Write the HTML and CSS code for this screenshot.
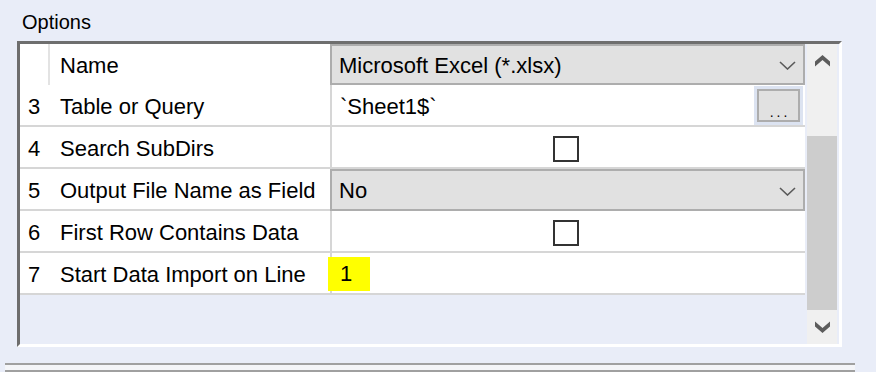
FILE: index.html
```html
<!DOCTYPE html>
<html lang="en">
<head>
  <meta charset="UTF-8" />
  <title>Options</title>
  <link rel="stylesheet" href="styles.css">
</head>
<body>
  <div class="title">Options</div>

  <div class="panel">
    <div class="grid">
      <div class="row first">
        <div class="num"></div>
        <div class="label">Name</div>
        <div class="value dropdown">
          <span>Microsoft Excel (*.xlsx)</span>
          <svg class="chev" width="17" height="9" viewBox="0 0 17 9"><polyline points="1,1 8.5,8 16,1" /></svg>
        </div>
      </div>

      <div class="row">
        <div class="num">3</div>
        <div class="label">Table or Query</div>
        <div class="value">
          <span>`Sheet1$`</span>
          <div class="browse"><span>...</span></div>
        </div>
      </div>

      <div class="row">
        <div class="num">4</div>
        <div class="label">Search SubDirs</div>
        <div class="value center"><div class="check"></div></div>
      </div>

      <div class="row">
        <div class="num">5</div>
        <div class="label">Output File Name as Field</div>
        <div class="value dropdown">
          <span>No</span>
          <svg class="chev" width="17" height="9" viewBox="0 0 17 9"><polyline points="1,1 8.5,8 16,1" /></svg>
        </div>
      </div>

      <div class="row">
        <div class="num">6</div>
        <div class="label">First Row Contains Data</div>
        <div class="value center"><div class="check"></div></div>
      </div>

      <div class="row">
        <div class="num">7</div>
        <div class="label">Start Data Import on Line</div>
        <div class="value"><span class="hl">1</span></div>
      </div>
    </div>

    <div class="scrollbar">
      <div class="arrow">
        <svg width="15" height="12" viewBox="0 0 15 12"><polygon points="0,6.5 7.5,0 15,6.5 15,11.5 7.5,5 0,11.5" /></svg>
      </div>
      <div class="track"><div class="thumb"></div></div>
      <div class="arrow">
        <svg width="15" height="12" viewBox="0 0 15 12"><polygon points="0,0.5 7.5,7 15,0.5 15,5.5 7.5,12 0,5.5" /></svg>
      </div>
    </div>
  </div>

  <div class="rule"></div>
</body>
</html>
```

FILE: styles.css
```css
* {
  box-sizing: border-box;
}
body {
  margin: 0;
  width: 876px;
  height: 372px;
  overflow: hidden;
  background: #e9edf8;
  font-family: "Liberation Sans", Arial, sans-serif;
  color: #000;
}
.title {
  font-size: 20px;
  line-height: 24px;
  padding: 10px 0 7px 22px;
}
.panel {
  display: flex;
  box-sizing: content-box;
  width: 817px;
  height: 300px;
  margin-left: 17px;
  padding-right: 2px;
  border-style: solid;
  border-width: 3px;
  border-color: #6e6e6e #fff #fff #6d6d6d;
}
.grid {
  width: 785px;
  margin-right: 2px;
}
.row {
  display: grid;
  grid-template-columns: 30px 282px 473px;
  height: 42px;
  background: #fff;
  font-size: 22px;
}
.row.first {
  height: 41px;
}
.num, .label, .value {
  display: flex;
  align-items: center;
  padding-top: 3px;
  border-bottom: 2px solid #d6d6d6;
}
.num {
  padding-left: 8px;
}
.label {
  padding-left: 10px;
  border-right: 2px solid #d6d6d6;
  white-space: nowrap;
}
.value {
  padding-left: 8px;
  justify-content: space-between;
}
.first .num {
  border-bottom: none;
  border-right: 2px solid #e3e3e3;
}
.first .label {
  border-bottom: none;
}
.dropdown {
  margin-left: -2px;
  padding: 2px 7px 0 7px;
  background: #e1e1e1;
  border: 2px solid #adadad;
}
.chev polyline {
  fill: none;
  stroke: #5a5a5a;
  stroke-width: 1.6;
}
.browse {
  align-self: stretch;
  width: 49px;
  margin: -2px 2px 0 0;
  padding: 3px;
  background: #dce3f1;
}
.browse span {
  display: flex;
  align-items: center;
  justify-content: center;
  height: 100%;
  padding-top: 12px;
  font-size: 14px;
  line-height: 16px;
  letter-spacing: 3px;
  text-indent: 3px;
  background: #e1e1e1;
  border: 2px solid #adadad;
}
.value.center {
  justify-content: center;
  padding: 4px 13px 0 8px;
}
.check {
  width: 26px;
  height: 26px;
  background: #fff;
  border: 2px solid #333;
}
.hl {
  align-self: flex-start;
  display: flex;
  align-items: center;
  width: 42px;
  height: 34px;
  margin: 1px 0 0 -12px;
  padding-left: 12px;
  background: #ffff00;
}
.scrollbar {
  display: flex;
  flex-direction: column;
  width: 30px;
  background: #f0f0f0;
}
.arrow {
  display: flex;
  align-items: center;
  justify-content: center;
  height: 34px;
  padding-left: 1px;
}
.arrow polygon {
  fill: #5c5c5c;
}
.track {
  flex: 1;
}
.thumb {
  height: 174px;
  margin-top: 58px;
  background: #cdcdcd;
}
.rule {
  width: 850px;
  height: 9px;
  margin: 16px 0 0 5px;
  background: #f4f5f8;
  border-top: 2px solid #a0a0a0;
  border-bottom: 2px solid #a0a0a0;
}
```
